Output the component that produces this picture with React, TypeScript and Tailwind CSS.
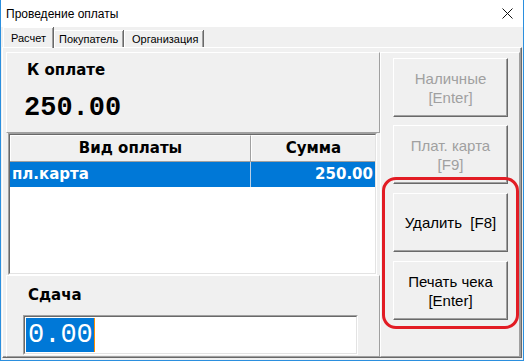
export default function App() {
  const raised = 'border-t border-l border-t-white border-l-white border-r border-b border-r-[#a0a0a0] border-b-[#a0a0a0]';

  return (
    <div className="relative flex h-[361px] w-[524px] flex-col border-x border-b border-[#2b8fde] bg-[#f0f0f0] font-['Liberation_Sans',Arial,sans-serif] text-black">
      {/* Title bar */}
      <div className="flex h-[27px] items-center justify-between bg-white pl-[5px] pr-[9px]">
        <span className="text-[12px]">Проведение оплаты</span>
        <svg width="11" height="11" viewBox="0 0 11 11" className="mr-[1px]">
          <path d="M0.5 0.5 L10.5 10.5 M10.5 0.5 L0.5 10.5" stroke="#111" strokeWidth="1" />
        </svg>
      </div>

      {/* Tabs */}
      <div className="flex h-[20px] items-end pl-[2px] text-[11px]">
        <div className="relative z-10 -mb-px flex h-[21px] w-[50px] items-center border-l border-t border-white pl-[7px] pt-[1px] shadow-[inset_-1px_0_0_#a0a0a0,1px_0_0_#696969]">
          Расчет
        </div>
        <div className="ml-px flex h-[17px] w-[69px] items-center border-l border-t border-white pl-[4px] shadow-[inset_-1px_0_0_#a0a0a0,1px_0_0_#696969]">
          Покупатель
        </div>
        <div className="ml-px flex h-[17px] w-[79px] items-center border-l border-t border-white pl-[7px] shadow-[inset_-1px_0_0_#a0a0a0,1px_0_0_#696969]">
          Организация
        </div>
      </div>

      {/* Tab page */}
      <div className="mb-[2px] ml-px mr-px flex flex-1 border-l border-t border-white border-r border-b border-r-[#696969] border-b-[#696969] pl-[3px] pt-[4px] shadow-[inset_-1px_-1px_0_#a0a0a0,inset_-2px_-2px_0_#f0f0f0]">
        {/* Left column */}
        <div className="flex w-[374px] flex-col">
          {/* К оплате */}
          <div className={`h-[81px] ${raised} pl-[20px] pt-[7px] font-['DejaVu_Sans',sans-serif]`}>
            <div className="text-[15px] font-bold leading-[20px]">К оплате</div>
            <div className="-ml-[3px] mt-[13px] font-['Liberation_Mono',monospace] text-[27px] font-bold leading-[30px]">250.00</div>
          </div>

          {/* Table */}
          <div className="ml-[2px] mr-[3px] h-[142px] border-l border-t border-[#a0a0a0] border-b border-r border-b-white border-r-white">
            <div className="flex h-full flex-col border-l border-t border-[#696969] border-b border-r border-b-[#e3e3e3] border-r-[#e3e3e3] bg-white font-['DejaVu_Sans',sans-serif] text-[15px] font-bold">
              <div className="flex h-[27px] border-b border-[#a0a0a0] bg-[#f0f0f0]">
                <div className="flex w-[241px] items-center justify-center border-l border-t border-r border-l-white border-t-white border-r-[#a0a0a0]">
                  Вид оплаты
                </div>
                <div className="flex flex-1 items-center justify-center border-l border-t border-white">
                  Сумма
                </div>
              </div>
              <div className="flex h-[25px] bg-[#0078d7] text-white">
                <div className="flex w-[241px] items-center border-r border-[#b9cfe6] pl-[2px]">пл.карта</div>
                <div className="flex flex-1 items-center justify-end pr-[2px]">250.00</div>
              </div>
            </div>
          </div>

          {/* Сдача */}
          <div className={`flex-1 ${raised} pl-[16px] pt-[9px]`}>
            <div className="pl-[5px] font-['DejaVu_Sans',sans-serif] text-[15px] font-bold leading-[20px]">Сдача</div>
            <div className="mt-[10px] flex h-[40px] w-[335px] border-l border-t border-[#a0a0a0] border-b border-r border-b-white border-r-white">
              <div className="flex flex-1 items-stretch border-l border-t border-[#696969] border-b border-r border-b-[#e3e3e3] border-r-[#e3e3e3] bg-white py-px pl-px">
                <span className="flex items-center bg-[#0078d7] pl-[2px] pr-[1px] font-['Liberation_Mono',monospace] text-[27px] text-white">0.00</span>
                <span className="w-px bg-[#ff8c00]" />
              </div>
            </div>
          </div>
        </div>

        {/* Right column */}
        <div className={`flex w-[140px] flex-col gap-[8px] ${raised} border-l-[#a0a0a0] pl-[12px] pt-[5px] text-[15px] leading-[19px]`}>
          {[
            { t: ['Наличные', '[Enter]'], off: true },
            { t: ['Плат. карта', '[F9]'], off: true },
            { t: ['Удалить  [F8]'], off: false },
            { t: ['Печать чека', '[Enter]'], off: false },
          ].map((b, i) => (
            <div
              key={i}
              className={`flex h-[59px] w-[115px] flex-col items-center justify-center whitespace-pre border-l border-t border-white border-b border-r border-b-[#696969] border-r-[#696969] bg-[#f0f0f0] shadow-[inset_-1px_-1px_0_#a0a0a0] ${
                b.off ? 'text-[#a0a0a0]' : 'text-black'
              } ${i >= 2 ? 'mt-[1px]' : ''}`}
            >
              {b.t.map((l) => (
                <span key={l}>{l}</span>
              ))}
            </div>
          ))}
        </div>
      </div>

      {/* Annotation */}
      <div className="absolute left-[381px] top-[177px] h-[152px] w-[137px] rounded-[14px] border-[3px] border-[#e21c24]" />
    </div>
  );
}
